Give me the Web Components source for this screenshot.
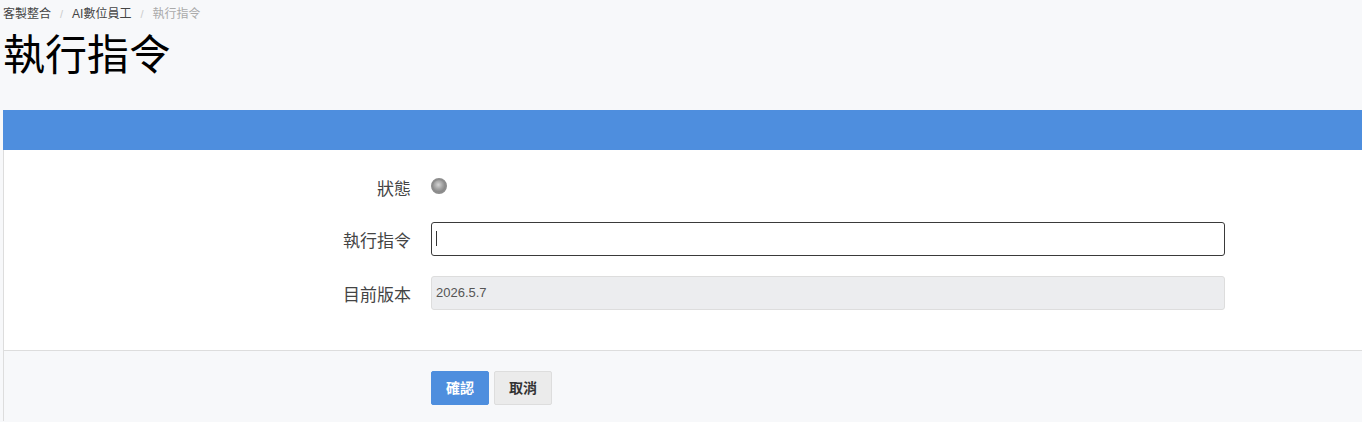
<!DOCTYPE html>
<html lang="zh-Hant">
<head>
<meta charset="utf-8">
<title>執行指令</title>
<style>
    html, body { margin: 0; padding: 0; height: 100%; overflow: hidden; background: #f7f8fa; }
    body { font-family: "Liberation Sans", "Noto Sans CJK TC", sans-serif; color: #000; }
</style>
</head>
<body>
<bread-crumb>
    <crumb-item>客製整合</crumb-item>
    <crumb-item>AI數位員工</crumb-item>
    <crumb-item current>執行指令</crumb-item>
</bread-crumb>
<page-title>執行指令</page-title>
<form-panel>
    <form-row label="狀態" kind="status"><status-led></status-led></form-row>
    <form-row label="執行指令"><command-input></command-input></form-row>
    <form-row label="目前版本"><readonly-field>2026.5.7</readonly-field></form-row>
    <action-button slot="actions" primary>確認</action-button>
    <action-button slot="actions">取消</action-button>
</form-panel>

<script>
class BreadCrumb extends HTMLElement {
    constructor(){
        super();
        this.attachShadow({mode:"open"}).innerHTML = `
        <style>
            :host { display: flex; align-items: center; box-sizing: border-box; height: 26px; padding: 2px 0 0 3px; }
        </style>
        <slot></slot>`;
    }
}

class CrumbItem extends HTMLElement {
    constructor(){
        super();
        this.attachShadow({mode:"open"}).innerHTML = `
        <style>
            :host { display: inline-flex; align-items: center; font-size: 12px; line-height: 24px; color: #444; }
            :host([current]) { color: #aaa; }
            .sep { color: #ccc; padding: 0 9px; font-size: 11px; }
            :host(:first-child) .sep { display: none; }
        </style>
        <span class="sep">/</span><slot></slot>`;
    }
}

class PageTitle extends HTMLElement {
    constructor(){
        super();
        this.attachShadow({mode:"open"}).innerHTML = `
        <style>
            :host { display: block; height: 84px; padding-left: 3px; font-size: 42px; line-height: 59px; color: #000; }
        </style>
        <slot></slot>`;
    }
}

class FormPanel extends HTMLElement {
    constructor(){
        super();
        this.attachShadow({mode:"open"}).innerHTML = `
        <style>
            :host { display: block; margin-left: 3px; background: #fff; border-left: 1px solid #ddd; }
            .head { height: 40px; margin-left: -1px; background: #4e8ede; }
            .body { height: 200px; box-sizing: border-box; padding-top: 20px; }
            .foot { display: flex; gap: 5px; height: 71px; box-sizing: border-box; padding: 20px 0 0 427px;
                    background: #f7f8fa; border-top: 1px solid #ddd; }
        </style>
        <div class="head"></div>
        <div class="body"><slot></slot></div>
        <div class="foot"><slot name="actions"></slot></div>`;
    }
}

class FormRow extends HTMLElement {
    constructor(){
        super();
        this.attachShadow({mode:"open"}).innerHTML = `
        <style>
            :host { display: grid; grid-template-columns: 407px 794px; grid-template-rows: 34px; column-gap: 20px;
                    align-items: center; height: 34px; margin-bottom: 20px; }
            :host([kind="status"]) { height: 32px; }
            label { align-self: start; height: 34px; text-align: right; font-size: 17px; line-height: 40px; color: #444; }
        </style>
        <label></label>
        <div><slot></slot></div>`;
        this.shadowRoot.querySelector("label").textContent = this.getAttribute("label");
    }
}

class StatusLed extends HTMLElement {
    constructor(){
        super();
        this.attachShadow({mode:"open"}).innerHTML = `
        <style>
            :host { display: block; width: 16px; height: 16px; border-radius: 50%; box-sizing: border-box;
                    margin-top: -2px; border: 2px solid #8d8d8d;
                    background: radial-gradient(circle at 45% 40%, #d4d4d4 0, #a2a2a2 45%, #6e6e6e 100%); }
        </style>`;
    }
}

class CommandInput extends HTMLElement {
    constructor(){
        super();
        this.attachShadow({mode:"open", delegatesFocus:true}).innerHTML = `
        <style>
            :host { display: block; position: relative; }
            input { display: block; box-sizing: border-box; width: 794px; height: 34px; padding: 0 4px; margin: 0;
                    border: 1px solid #3a3a3a; border-radius: 3px; outline: none; background: #fff;
                    font: 13px "Liberation Sans", sans-serif; color: #333; caret-color: transparent; }
            .caret { position: absolute; left: 5px; top: 9px; width: 1px; height: 15px; background: #333; }
        </style>
        <input type="text">
        <span class="caret"></span>`;
    }
    connectedCallback(){
        this.shadowRoot.querySelector("input").focus();
    }
}

class ReadonlyField extends HTMLElement {
    constructor(){
        super();
        this.attachShadow({mode:"open"}).innerHTML = `
        <style>
            :host { display: block; box-sizing: border-box; width: 794px; height: 34px; padding: 0 4px;
                    border: 1px solid #ddd; border-radius: 3px; background: #ecedef;
                    font-size: 13px; line-height: 31px; color: #555; }
        </style>
        <slot></slot>`;
    }
}

class ActionButton extends HTMLElement {
    constructor(){
        super();
        this.attachShadow({mode:"open"}).innerHTML = `
        <style>
            :host { display: block; box-sizing: border-box; width: 58px; height: 34px; border: 1px solid #ddd;
                    border-radius: 2px; background: #ebebeb; color: #333; text-align: center;
                    font-size: 14px; font-weight: bold; line-height: 32px; }
            :host([primary]) { background: #4e8ede; border-color: #4e8ede; color: #fff; }
        </style>
        <slot></slot>`;
    }
}

customElements.define("bread-crumb", BreadCrumb);
customElements.define("crumb-item", CrumbItem);
customElements.define("page-title", PageTitle);
customElements.define("form-panel", FormPanel);
customElements.define("form-row", FormRow);
customElements.define("status-led", StatusLed);
customElements.define("command-input", CommandInput);
customElements.define("readonly-field", ReadonlyField);
customElements.define("action-button", ActionButton);
</script>
</body>
</html>
